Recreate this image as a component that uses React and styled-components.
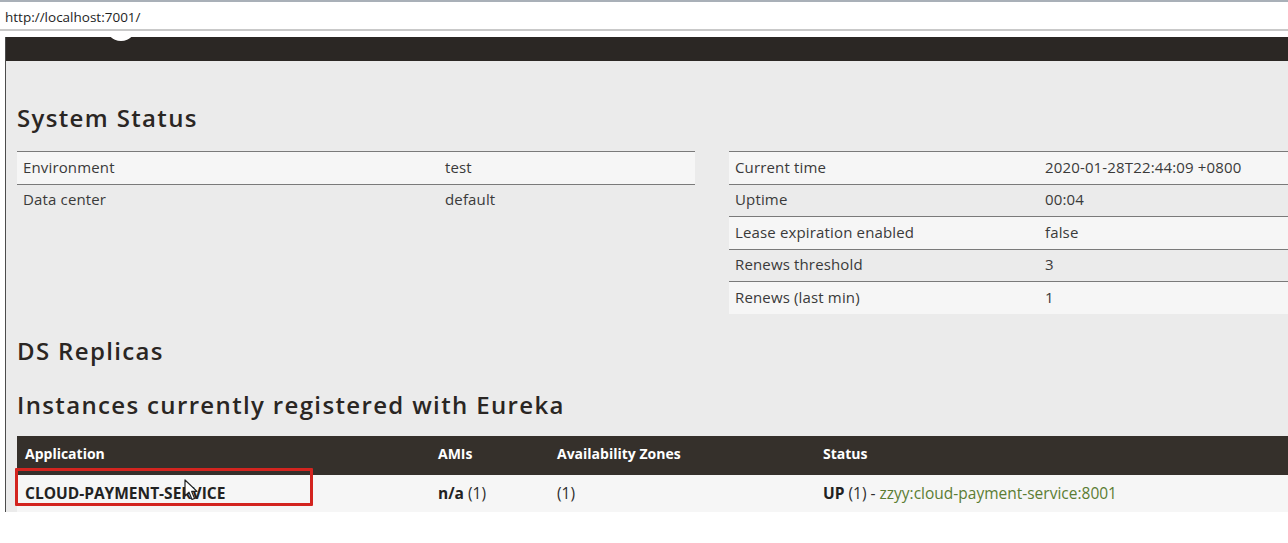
import React from "react";
import styled, { createGlobalStyle } from "styled-components";

const GlobalStyle = createGlobalStyle`
  html, body {
    margin: 0;
    padding: 0;
    background: #ffffff;
  }
  body {
    font-family: "Open Sans", "Liberation Sans", sans-serif;
    overflow: hidden;
  }
`;

const systemLeft = [
  ["Environment", "test"],
  ["Data center", "default"],
];

const systemRight = [
  ["Current time", "2020-01-28T22:44:09 +0800"],
  ["Uptime", "00:04"],
  ["Lease expiration enabled", "false"],
  ["Renews threshold", "3"],
  ["Renews (last min)", "1"],
];

const Cursor = () => (
  <CursorSvg width="16" height="22" viewBox="0 0 16 22">
    <path
      d="M1 1 L1 17 L5 13.2 L8 20.5 L10.6 19.4 L7.7 12.4 L13 12.4 Z"
      fill="#ffffff"
      stroke="#222"
      strokeWidth="1.2"
      strokeLinejoin="round"
    />
  </CursorSvg>
);

const App = () => {
  return (
    <>
      <GlobalStyle />
      <AddressBar>http://localhost:7001/</AddressBar>
      <Frame>
        <Navbar>
          <LogoTip />
        </Navbar>
        <Content>
          <Heading $top={42}>System Status</Heading>
          <StatusGrid>
            <InfoTable $width={678} $keyWidth={428}>
              <tbody>
                {systemLeft.map(([k, v], i) => (
                  <InfoRow key={k} $striped={i % 2 === 0}>
                    <td>{k}</td>
                    <td>{v}</td>
                  </InfoRow>
                ))}
              </tbody>
            </InfoTable>
            <InfoTable $width={678} $keyWidth={316}>
              <tbody>
                {systemRight.map(([k, v], i) => (
                  <InfoRow key={k} $striped={i % 2 === 0}>
                    <td>{k}</td>
                    <td>{v}</td>
                  </InfoRow>
                ))}
              </tbody>
            </InfoTable>
          </StatusGrid>
          <Heading $top={22}>DS Replicas</Heading>
          <Heading $top={24}>Instances currently registered with Eureka</Heading>
          <InstanceTable>
            <thead>
              <tr>
                <HeadCell $width={413}>Application</HeadCell>
                <HeadCell $width={119}>AMIs</HeadCell>
                <HeadCell $width={266}>Availability Zones</HeadCell>
                <HeadCell>Status</HeadCell>
              </tr>
            </thead>
            <tbody>
              <tr>
                <BodyCell>
                  <b>CLOUD-PAYMENT-SERVICE</b>
                  <Highlight />
                  <Cursor />
                </BodyCell>
                <BodyCell>
                  <b>n/a</b> (1)
                </BodyCell>
                <BodyCell>(1)</BodyCell>
                <BodyCell>
                  <b>UP</b> (1) - <InstanceLink href="#">zzyy:cloud-payment-service:8001</InstanceLink>
                </BodyCell>
              </tr>
            </tbody>
          </InstanceTable>
        </Content>
      </Frame>
    </>
  );
};

const AddressBar = styled.div`
  height: 27px;
  border-top: 2px solid #a9b0b8;
  border-bottom: 2px solid #c9c9c9;
  background: #ffffff;
  padding-left: 5px;
  font-size: 13.5px;
  line-height: 31px;
  color: #1e1e1e;
  box-sizing: content-box;
`;

const Frame = styled.div`
  margin: 6px 0 0 5px;
  height: 475px;
  border-left: 1px solid #4c4c4c;
  background: #ebebeb;
  overflow: hidden;
`;

const Navbar = styled.div`
  position: relative;
  height: 24px;
  background: #2b2724;
`;

const LogoTip = styled.div`
  position: absolute;
  left: 99px;
  top: -30px;
  width: 32px;
  height: 34px;
  border-radius: 50%;
  background: #ffffff;
`;

const Content = styled.div`
  padding-left: 11px;
  width: 1400px;
`;

const Heading = styled.h2`
  margin: ${(p) => p.$top}px 0 0;
  font-size: 24px;
  line-height: 30px;
  font-weight: 600;
  color: #2a2623;
  letter-spacing: 1.35px;
`;

const StatusGrid = styled.div`
  display: grid;
  grid-template-columns: 678px 678px;
  column-gap: 34px;
  margin-top: 18px;
  align-items: start;
`;

const InfoTable = styled.table`
  width: ${(p) => p.$width}px;
  border-collapse: collapse;
  font-size: 15px;
  letter-spacing: 0.15px;
  color: #3a3a3a;
  td {
    height: 29.5px;
    padding: 0 0 2px 6px;
    vertical-align: middle;
    border-top: 1px solid #7a7a7a;
  }
  td + td {
    padding-left: 0;
  }
  td:first-child {
    width: ${(p) => p.$keyWidth - 6}px;
  }
`;

const InfoRow = styled.tr`
  background: ${(p) => (p.$striped ? "#f6f6f6" : "transparent")};
`;

const InstanceTable = styled.table`
  margin-top: 16px;
  width: 1400px;
  border-collapse: collapse;
  font-size: 14px;
`;

const HeadCell = styled.th`
  width: ${(p) => (p.$width ? `${p.$width - 8}px` : "auto")};
  height: 36px;
  padding: 0 0 3px 8px;
  background: #35302b;
  color: #ffffff;
  font-weight: 700;
  text-align: left;
  vertical-align: middle;
`;

const BodyCell = styled.td`
  position: relative;
  height: 37px;
  padding: 0 0 1px 8px;
  background: #f6f6f6;
  color: #2e2e2e;
  font-size: 15.5px;
  vertical-align: middle;
  b {
    font-weight: 700;
    color: #222;
  }
`;

const InstanceLink = styled.a`
  color: #5b7d33;
  text-decoration: none;
`;

const Highlight = styled.span`
  position: absolute;
  left: -2px;
  top: -7px;
  width: 292px;
  height: 32px;
  border: 3px solid #d3241f;
  border-radius: 1px;
  pointer-events: none;
`;

const CursorSvg = styled.svg`
  position: absolute;
  left: 167px;
  top: 4px;
  pointer-events: none;
`;

export default App;
